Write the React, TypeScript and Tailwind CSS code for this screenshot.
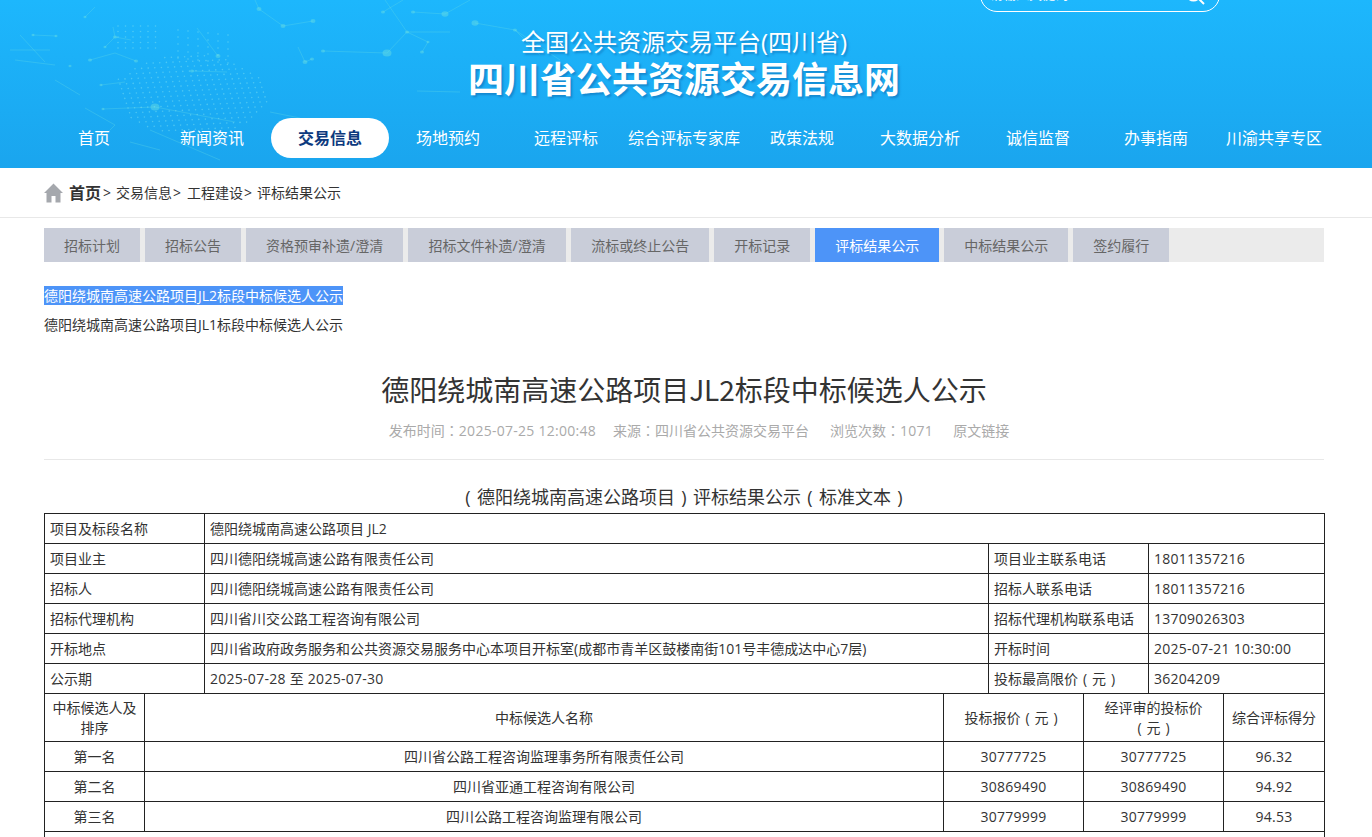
import type { ReactNode } from 'react'

const navItems = ['首页', '新闻资讯', '交易信息', '场地预约', '远程评标', '综合评标专家库', '政策法规', '大数据分析', '诚信监督', '办事指南', '川渝共享专区']
const tabs = ['招标计划', '招标公告', '资格预审补遗/澄清', '招标文件补遗/澄清', '流标或终止公告', '开标记录', '评标结果公示', '中标结果公示', '签约履行']

// 全角冒号居中显示
function Colon() {
    return <span className="font-['Noto_Sans_CJK_TC',sans-serif]">：</span>
}

// 括号占一个字宽并居中
function Paren({ children }: { children: ReactNode }) {
    return <span className="inline-block w-[1em] text-center">{children}</span>
}

function Num({ children }: { children: ReactNode }) {
    return <span className="tracking-[0.27px]">{children}</span>
}

const Yuan = () => (
    <>
        <Paren>(</Paren>元<Paren>)</Paren>
    </>
)

const infoRows: { key: string; name: string; value: ReactNode; label: ReactNode; extra: string }[] = [
    { key: '项目业主', name: '项目业主', value: '四川德阳绕城高速公路有限责任公司', label: '项目业主联系电话', extra: '18011357216' },
    { key: '招标人', name: '招标人', value: '四川德阳绕城高速公路有限责任公司', label: '招标人联系电话', extra: '18011357216' },
    { key: '招标代理机构', name: '招标代理机构', value: '四川省川交公路工程咨询有限公司', label: '招标代理机构联系电话', extra: '13709026303' },
    { key: '开标地点', name: '开标地点', value: '四川省政府政务服务和公共资源交易服务中心本项目开标室(成都市青羊区鼓楼南街101号丰德成达中心7层)', label: '开标时间', extra: '2025-07-21 10:30:00' },
    { key: '公示期', name: '公示期', value: <Num>2025-07-28 至 2025-07-30</Num>, label: <>投标最高限价<Yuan /></>, extra: '36204209' },
]

const candidates = [
    ['第一名', '四川省公路工程咨询监理事务所有限责任公司', '30777725', '30777725', '96.32'],
    ['第二名', '四川省亚通工程咨询有限公司', '30869490', '30869490', '94.92'],
    ['第三名', '四川公路工程咨询监理有限公司', '30779999', '30779999', '94.53'],
]

// 背景网络图的线段
const lines = [
    '255,0 259,9 283,26 313,21',
    '383,12 403,0',
    '413,12 445,14',
    '323,51 387,53 407,32 450,32',
    '407,32 428,42 422,52',
    '85,17 95,7',
    '113,27 115,37 105,47',
    '115,37 131,40',
    '90,60 115,53 136,61',
    '197,28 218,56',
    '33,35 56,36',
    '103,109 155,107 235,122',
    '101,85 125,82',
    '192,71 227,72',
    '298,47 305,62 312,59',
    '417,91 460,92',
    '445,14 470,0',
    '475,23 515,30 540,55',
    '515,30 560,60',
    '407,32 385,0',
    '100,140 115,125 85,108',
    '20,35 45,62',
    '10,50 50,50',
    '15,60 55,65',
    '55,80 80,95',
    '150,130 220,160',
    '130,142 160,150',
    '270,112 300,118',
]

const nodes = [
    [259, 9, 2.5], [283, 26, 2.5], [313, 21, 2.5], [383, 12, 2], [413, 12, 2], [445, 14, 3.5], [323, 51, 2], [387, 53, 4.5],
    [407, 32, 2], [422, 52, 2], [428, 42, 1.5], [85, 17, 1.5], [115, 37, 2], [105, 47, 1.5], [90, 60, 2], [136, 61, 2],
    [218, 56, 2.5], [56, 36, 1.5], [33, 35, 1.5], [155, 107, 4.5], [103, 109, 1.5], [101, 85, 1.5], [192, 71, 2], [305, 62, 2.5],
    [312, 59, 2], [475, 23, 3.5], [515, 30, 2], [70, 66, 1.5],
]

const mapDots: [number, number][] = []
for (let r = 0; r < 24; r++) {
    for (let c = 0; c < 26; c++) {
        const x = 112 + c * 6.6 + r * 1.6
        const y = 60 + r * 4.8 - c * 0.3
        const d = ((x - 190) / 78) ** 2 + ((y - 95) / 40) ** 2
        if (d < 1) mapDots.push([x, y])
    }
}
for (let r = 0; r < 5; r++) {
    for (let c = 0; c < 6; c++) {
        mapDots.push([118 + c * 7.5, 26 + r * 5.5])
        mapDots.push([178 + c * 10, 30 + r * 7 + c])
    }
}

function HeaderMap() {
    return (
        <svg className="absolute left-0 top-0 h-[168px] w-[600px]" viewBox="0 0 600 168" fill="none">
            {lines.map((p) => (
                <polyline key={p} points={p} stroke="#6fe3e0" strokeOpacity="0.3" strokeWidth="0.9" />
            ))}
            {nodes.map(([x, y, r]) => (
                <ellipse key={`${x}-${y}`} cx={x} cy={y} rx={r} ry={r * 0.8} fill="#6fe3e0" fillOpacity="0.42" />
            ))}
            {mapDots.map(([x, y], i) => (
                <circle key={i} cx={x} cy={y} r="0.8" fill="#8feaf0" fillOpacity="0.42" />
            ))}
        </svg>
    )
}

function HomeIcon() {
    return (
        <svg className="h-5 w-[19px]" viewBox="0 0 19 20" fill="#a5a8ad">
            <path d="M9.5 0.5 L19 10 L16.5 10 L16.5 19.5 L11.5 19.5 L11.5 13 L7.5 13 L7.5 19.5 L2.5 19.5 L2.5 10 L0 10 Z" />
        </svg>
    )
}

function Cell({ children, colSpan, center, tight }: { children: ReactNode; colSpan?: number; center?: boolean; tight?: boolean }) {
    return (
        <td colSpan={colSpan} className={`border border-[#222] px-[5px] py-0 align-middle ${tight ? 'leading-[20px]' : 'leading-[24px]'} ${center ? 'text-center' : 'text-left'}`}>
            {children}
        </td>
    )
}

export default function App() {
    return (
        <div className="h-[837px] overflow-hidden bg-white font-['Open_Sans','Noto_Sans_CJK_SC',sans-serif] text-[14px] text-[#333]">
            <header className="relative h-[168px] overflow-hidden bg-gradient-to-b from-[#1db7fd] to-[#1aa5ee]">
                <HeaderMap />
                <div className="relative flex h-[168px] w-[1368px] flex-col">
                    <div className="flex h-[12px] items-end justify-end pr-[46px] text-white">
                        <div className="flex h-[34px] w-[240px] items-center justify-between rounded-[17px] border border-white pl-[9px] pr-[14px] text-[13px]">
                            <span>请输入关键词</span>
                            <svg className="h-5 w-5" viewBox="0 0 20 20" fill="none" stroke="white" strokeWidth="2">
                                <circle cx="8.5" cy="8.5" r="7" />
                                <path d="M13.5 13.5 L19 19" />
                            </svg>
                        </div>
                        <div className="mb-[9px] ml-[20px] flex gap-[18px] text-[16px] leading-[24px]">
                            <span className="underline">登录</span>
                            <span>注册</span>
                        </div>
                    </div>
                    <div className="mt-[14px] text-center text-white">
                        <div className="text-[24px] leading-[32px] [text-shadow:2px_2px_2px_rgba(15,110,180,0.55)]">全国公共资源交易平台(四川省)</div>
                        <div className="text-[36px] font-bold leading-[44px] [text-shadow:2px_2px_2px_rgba(15,110,180,0.55)]">四川省公共资源交易信息网</div>
                    </div>
                    <nav className="mx-auto mt-[16px] flex w-[1298px] text-[16px] text-white">
                        {navItems.map((item) => (
                            <a
                                key={item}
                                className={`flex h-10 flex-1 items-center justify-center whitespace-nowrap rounded-[20px] pb-[1px] ${item === '交易信息' ? 'bg-white font-bold text-[#0d3a7e]' : ''}`}
                            >
                                {item}
                            </a>
                        ))}
                    </nav>
                </div>
            </header>

            <div className="border-b border-[#e8e8e8]">
                <div className="mx-[44px] flex h-[49px] items-center text-[#333]">
                    <HomeIcon />
                    <span className="ml-[6px] text-[16px] font-bold">首页</span>
                    <span className="ml-[2px]">&gt;</span>
                    <span className="ml-[5px]">交易信息</span>
                    <span className="ml-[1px]">&gt;</span>
                    <span className="ml-[6px]">工程建设</span>
                    <span className="ml-[1px]">&gt;</span>
                    <span className="ml-[5px]">评标结果公示</span>
                </div>
            </div>

            <main className="ml-[44px] w-[1280px]">
                <div className="mt-[10px] flex h-[34px] gap-[5px] bg-[#ebebeb]">
                    {tabs.map((tab, i) => (
                        <a
                            key={tab}
                            className={`flex items-center justify-center px-5 ${i === 3 ? 'w-[158px]' : ''} ${tab === '评标结果公示' ? 'bg-[#4d94f8] text-white' : 'bg-[#c9cdd9] text-[#666]'}`}
                        >
                            {tab}
                        </a>
                    ))}
                </div>

                <ul className="mt-[19px] text-[#333]">
                    <li className="h-[29px] leading-[29px]">
                        <span className="bg-[#4d94f8] text-white">德阳绕城南高速公路项目JL2标段中标候选人公示</span>
                    </li>
                    <li className="h-[29px] leading-[29px]">德阳绕城南高速公路项目JL1标段中标候选人公示</li>
                </ul>

                <h1 className="mt-[30px] text-center font-['Noto_Sans_CJK_SC',sans-serif] text-[28px] font-normal leading-[40px]">德阳绕城南高速公路项目JL2标段中标候选人公示</h1>
                <div className="mt-[10px] flex h-[22px] items-center justify-center gap-[16px] pl-[30px] text-[#aaa]">
                    <span>发布时间<Colon /><Num>2025-07-25 12:00:48</Num></span>
                    <span className="ml-[1px]">来源<Colon />四川省公共资源交易平台</span>
                    <span className="ml-[5px]">浏览次数<Colon /><Num>1071</Num></span>
                    <span className="ml-[4px]">原文链接</span>
                </div>
                <div className="mt-[18px] border-t border-[#e8e8e8]" />

                <h2 className="mt-[24px] text-center text-[18px] font-normal leading-[26px]">
                    <Paren>(</Paren>德阳绕城南高速公路项目<Paren>)</Paren>评标结果公示<Paren>(</Paren>标准文本<Paren>)</Paren>
                </h2>

                <table className="mt-[3px] w-[1280px] table-fixed border-collapse">
                    <colgroup>
                        <col className="w-[100px]" />
                        <col className="w-[60px]" />
                        <col className="w-[739px]" />
                        <col className="w-[45px]" />
                        <col className="w-[95px]" />
                        <col className="w-[65px]" />
                        <col className="w-[75px]" />
                        <col className="w-[101px]" />
                    </colgroup>
                    <tbody>
                        <tr className="h-[30px]">
                            <Cell colSpan={2}>项目及标段名称</Cell>
                            <Cell colSpan={6}>德阳绕城南高速公路项目 JL2</Cell>
                        </tr>
                        {infoRows.map((row) => (
                            <tr key={row.key} className="h-[30px]">
                                <Cell colSpan={2}>{row.name}</Cell>
                                <Cell colSpan={2}>{row.value}</Cell>
                                <Cell colSpan={2}>{row.label}</Cell>
                                <Cell colSpan={2}><Num>{row.extra}</Num></Cell>
                            </tr>
                        ))}
                        <tr className="h-[48px]">
                            <Cell center tight>中标候选人及排序</Cell>
                            <Cell center tight colSpan={2}>中标候选人名称</Cell>
                            <Cell center tight colSpan={2}>投标报价<Yuan /></Cell>
                            <Cell center tight colSpan={2}>经评审的投标价<br /><Yuan /></Cell>
                            <Cell center tight>综合评标得分</Cell>
                        </tr>
                        {candidates.map((row) => (
                            <tr key={row[0]} className="h-[30px]">
                                <Cell center>{row[0]}</Cell>
                                <Cell center colSpan={2}>{row[1]}</Cell>
                                <Cell center colSpan={2}><Num>{row[2]}</Num></Cell>
                                <Cell center colSpan={2}><Num>{row[3]}</Num></Cell>
                                <Cell center><Num>{row[4]}</Num></Cell>
                            </tr>
                        ))}
                        <tr className="h-[60px]">
                            <Cell colSpan={8}>{' '}</Cell>
                        </tr>
                    </tbody>
                </table>
            </main>
        </div>
    )
}
